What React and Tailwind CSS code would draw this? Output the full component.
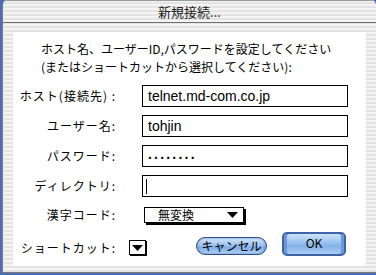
import React from "react";

const stripes =
  "bg-[repeating-linear-gradient(to_bottom,#f4f4f4_0px,#f4f4f4_2px,#e3e3e3_2px,#e3e3e3_4px)]";

function Label({ children }) {
  return (
    <div className="w-[103px] shrink-0 text-right text-[12px] leading-[14px] text-black tracking-[1px]">
      {children}
    </div>
  );
}

function Field({ children }) {
  return (
    <div className="ml-[26px] flex h-[22px] w-[206px] items-center border border-black bg-white pl-[5px] text-[14px] text-black [font-family:'Liberation_Sans',sans-serif]">
      {children}
    </div>
  );
}

export default function App() {
  return (
    <div className="h-[275px] w-[376px] overflow-hidden bg-[#4a6eb8] [font-family:'Noto_Sans_CJK_JP',sans-serif]">
      <div className={`ml-[2px] flex h-[273px] w-[374px] flex-col overflow-hidden rounded-t-[5px] border-b border-l border-[#7a7a7a] ${stripes}`}>
        {/* title bar */}
        <div className="flex h-[22px] shrink-0 items-center justify-center border-t border-[#9a9a9a] text-[13px] text-[#222]">
          新規接続...
        </div>
        <div className="h-[1px] shrink-0 bg-[#6e6e6e]" />
        <div className="flex flex-1 flex-col px-[10px] pt-[9px] pb-[6px]">
          <div className="flex flex-1 flex-col bg-white">
            <div className="pl-[28px] pt-[8px] text-[12px] leading-[18px] text-black">
              <div>ホスト名、ユーザーID,パスワードを設定してください</div>
              <div>(またはショートカットから選択してください):</div>
            </div>
            <div className="mt-[9px] flex flex-col gap-[8px]">
              <div className="flex items-center">
                <Label>ホスト(接続先) :</Label>
                <Field>telnet.md-com.co.jp</Field>
              </div>
              <div className="flex items-center">
                <Label>ユーザー名:</Label>
                <Field>tohjin</Field>
              </div>
              <div className="flex items-center">
                <Label>パスワード:</Label>
                <Field>
                  <span className="-mt-[4px] text-[14px] font-bold tracking-[2.2px]">........</span>
                </Field>
              </div>
              <div className="flex items-center">
                <Label>ディレクトリ:</Label>
                <Field>
                  <span className="ml-[-2px] h-[15px] w-[1px] bg-black" />
                </Field>
              </div>
            </div>
            <div className="mt-[10px] flex items-center">
              <Label>漢字コード:</Label>
              <div className="ml-[28px] flex h-[16px] w-[100px] items-center border border-black bg-white shadow-[2px_2px_0_#000]">
                <span className="ml-[13px] text-[12px] leading-[14px] text-black">無変換</span>
                <svg className="ml-auto mr-[5px]" width="11" height="6" viewBox="0 0 11 6">
                  <polygon points="0,0 11,0 5.5,6" fill="#000" />
                </svg>
              </div>
            </div>
            <div className="mt-[9px] flex items-start">
              <div className="mt-[8px] flex items-center">
                <Label>ショートカット:</Label>
                <div className="ml-[13px] flex h-[15px] w-[17px] items-center justify-center border border-black bg-white shadow-[1px_1px_0_#000]">
                  <svg width="11" height="6" viewBox="0 0 11 6">
                    <polygon points="0,0 11,0 5.5,6" fill="#000" />
                  </svg>
                </div>
              </div>
              <div className="ml-[50px] mt-[5px] flex h-[18px] w-[71px] items-center justify-center rounded-full border border-[#2f4f8a] bg-[linear-gradient(to_bottom,#d4e6fb_0%,#9cc2ee_45%,#7eaee6_60%,#b4d4f6_100%)] text-[12px] leading-[14px] text-black shadow-[inset_0_0_2px_#4a70b0]">
                キャンセル
              </div>
              <div className="ml-[15px] flex h-[24px] w-[64px] items-start justify-center rounded-[5px] border-[2px] border-[#3d64a8] bg-[linear-gradient(to_bottom,#cfe3fa_0%,#9ec4ee_40%,#84b2e8_60%,#a9cdf3_100%)] pt-[2px] text-[12px] leading-[14px] text-black shadow-[inset_3px_0_0_#6d98d6,inset_-3px_0_0_#6d98d6]">
                OK
              </div>
            </div>
          </div>
        </div>
      </div>
    </div>
  );
}
